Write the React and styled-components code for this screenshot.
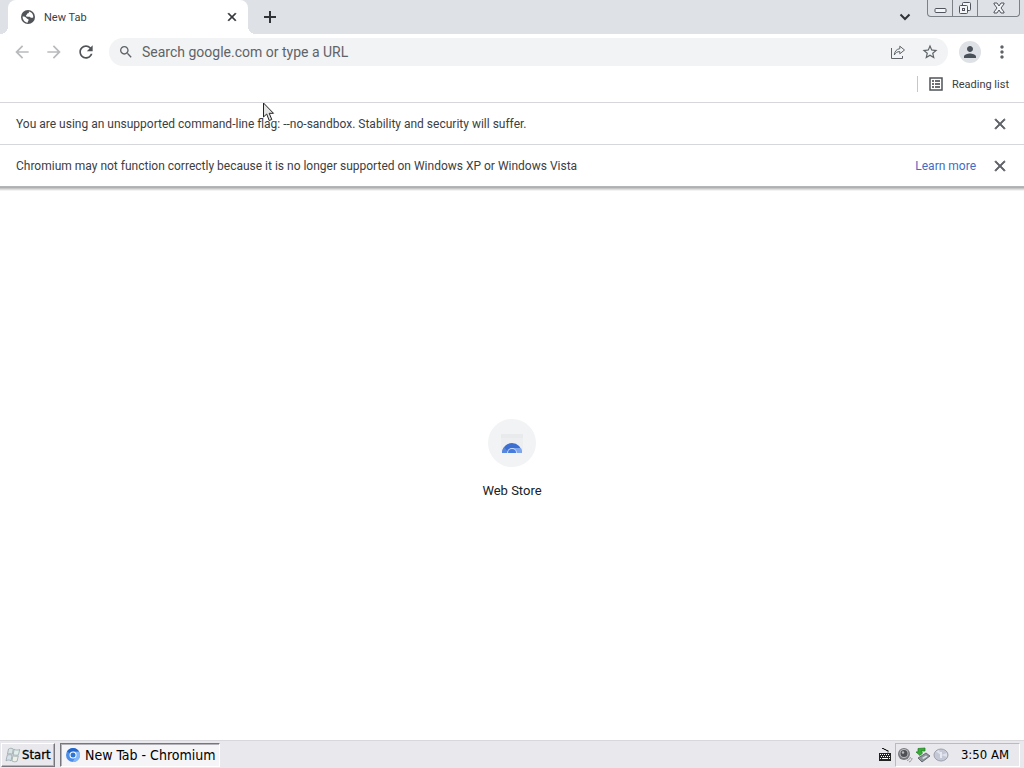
import React from "react";
import styled, { createGlobalStyle } from "styled-components";

const GlobalStyle = createGlobalStyle`
  *, *::before, *::after { box-sizing: border-box; }
  body {
    margin: 0;
    background: #fff;
    font-family: Roboto, "Noto Sans", sans-serif;
    font-size: 12px;
    color: #3c4043;
  }
  button, input { font: inherit; color: inherit; }
  button { border: 0; padding: 0; background: none; }
`;

const Desktop = styled.div`
  position: relative;
  display: flex;
  flex-direction: column;
  min-height: 100vh;
`;

const TabStrip = styled.header`
  display: flex;
  align-items: flex-start;
  height: 34px;
  padding-left: 8px;
  background: #dee1e6;
`;

const Tab = styled.div`
  position: relative;
  display: flex;
  align-items: center;
  gap: 8px;
  width: 240px;
  height: 34px;
  padding: 0 8px 0 12px;
  border-radius: 8px 8px 0 0;
  background: #fff;
  font-size: 11px;

  &::before, &::after {
    content: "";
    position: absolute;
    bottom: 0;
    width: 8px;
    height: 8px;
  }
  &::before {
    right: 100%;
    background: radial-gradient(circle at 0 0, transparent 8px, #fff 8px);
  }
  &::after {
    left: 100%;
    background: radial-gradient(circle at 100% 0, transparent 8px, #fff 8px);
  }
`;

const TabTitle = styled.span`
  flex: 1;
`;

const IconButton = styled.button`
  display: flex;
  flex: none;
  align-items: center;
  justify-content: center;
  width: ${(p) => p.$size || 32}px;
  height: ${(p) => p.$size || 32}px;
  color: ${(p) => p.$color || "#5f6368"};
`;

const NewTabButton = styled(IconButton)`
  margin: 3px auto 0 8px;
`;

const TabSearchButton = styled(IconButton)`
  margin: 3px 8px 0 0;
`;

const WindowControls = styled.div`
  display: flex;
  height: 17px;
  margin-right: 4px;
  border: 1px solid #7c8087;
  border-top: 0;
  border-radius: 0 0 4px 4px;
`;

const WindowButton = styled.button`
  display: flex;
  align-items: center;
  justify-content: center;
  width: ${(p) => p.$width}px;
  height: 16px;
  color: #50555d;

  & + & { border-left: 1px solid #7c8087; }
`;

const Toolbar = styled.nav`
  display: flex;
  align-items: center;
  height: 36px;
  padding: 0 6px;
`;

const Omnibox = styled.label`
  display: flex;
  flex: 1;
  align-items: center;
  height: 28px;
  margin: 0 6px 0 7px;
  padding: 0 2px 0 9px;
  border-radius: 14px;
  background: #f1f3f4;
  color: #5f6368;
`;

const OmniboxInput = styled.input`
  flex: 1;
  min-width: 0;
  height: 24px;
  margin-left: 8px;
  padding: 0;
  border: 0;
  outline: 0;
  background: none;
  font-size: 14px;

  &::placeholder { color: #5f6368; opacity: 1; }
`;

const Avatar = styled.span`
  display: flex;
  align-items: center;
  justify-content: center;
  width: 22px;
  height: 22px;
  border-radius: 50%;
  background: #dee1e6;
  color: #4a5158;
`;

const BookmarkBar = styled.div`
  display: flex;
  align-items: center;
  justify-content: flex-end;
  height: 32px;
  padding: 0 15px 4px 0;
`;

const ReadingList = styled.button`
  display: flex;
  align-items: center;
  gap: 8px;
  height: 16px;
  padding-left: 10px;
  border-left: 1px solid #c4c7cc;
  font-size: 11px;
`;

const InfoBar = styled.section`
  display: flex;
  align-items: center;
  height: 42px;
  padding: 0 8px 0 16px;
  border-top: 1px solid #d5d7da;
`;

const InfoText = styled.p`
  flex: 1;
  margin: 0;
`;

const LearnMore = styled.a`
  margin-right: 8px;
  color: #3f6cc4;
  text-decoration: none;
`;

const Page = styled.main`
  display: flex;
  flex: 1;
  align-items: center;
  justify-content: center;
  padding-bottom: 8px;
  border-top: 1px solid #b4b5b6;
  background: linear-gradient(#a4a5a6, #fff 4px);
`;

const Shortcut = styled.a`
  display: flex;
  flex-direction: column;
  align-items: center;
  gap: 15px;
  color: #202124;
  font-size: 13px;
  line-height: 18px;
  text-decoration: none;
`;

const ShortcutIcon = styled.span`
  display: flex;
  align-items: center;
  justify-content: center;
  width: 48px;
  height: 48px;
  border-radius: 50%;
  background: #f1f3f4;
`;

const TaskBar = styled.footer`
  display: flex;
  align-items: center;
  height: 28px;
  padding: 0 4px 0 1px;
  border-top: 1px solid #d8d7dc;
  background: #e9e8ec;
  color: #000;
  font-family: "DejaVu Sans Condensed", "DejaVu Sans", sans-serif;
  font-size: 13px;
`;

const StartButton = styled.button`
  display: flex;
  align-items: center;
  gap: 1px;
  width: 54px;
  height: 24px;
  padding-left: 3px;
  border: 1px solid;
  border-color: #fff #77767c #77767c #fff;
  box-shadow: inset -1px -1px #b4b3ba;
  -webkit-text-stroke: 0.3px #000;
`;

const TaskButton = styled.button`
  display: flex;
  align-items: center;
  gap: 4px;
  width: 160px;
  height: 24px;
  margin-left: 5px;
  padding-left: 4px;
  border: 1px solid;
  border-color: #77767c #fff #fff #77767c;
  box-shadow: inset 1px 1px #b4b3ba;
  background: #f5f4f7;
  font-size: 14px;
  white-space: nowrap;
`;

const KeyboardTray = styled.span`
  display: flex;
  margin: 0 3px 0 auto;
`;

const Tray = styled.div`
  display: flex;
  align-items: center;
  gap: 2px;
  height: 24px;
  padding: 0 10px 0 1px;
  border: 1px solid;
  border-color: #bbbac1 #fff #fff #bbbac1;
`;

const Clock = styled.time`
  margin-left: 10px;
`;

const Cursor = styled.svg`
  position: absolute;
  top: 102px;
  left: 262px;
  pointer-events: none;
`;

const Glyph = ({ d, size = 16, box = 24, weight = 0 }) => (
  <svg width={size} height={size} viewBox={`0 0 ${box} ${box}`} fill="currentColor" aria-hidden="true">
    <path d={d} stroke="currentColor" strokeWidth={weight} />
  </svg>
);

const paths = {
  close: "M19 6.41 17.59 5 12 10.59 6.41 5 5 6.41 10.59 12 5 17.59 6.41 19 12 13.41 17.59 19 19 17.59 13.41 12z",
  back: "M20 11H7.83l5.59-5.59L12 4l-8 8 8 8 1.41-1.41L7.83 13H20v-2z",
  forward: "M12 4l-1.41 1.41L16.17 11H4v2h12.17l-5.58 5.59L12 20l8-8z",
  reload: "M17.65 6.35C16.2 4.9 14.21 4 12 4c-4.42 0-7.99 3.58-7.99 8s3.57 8 7.99 8c3.73 0 6.84-2.55 7.73-6h-2.08c-.82 2.33-3.04 4-5.65 4-3.31 0-6-2.69-6-6s2.69-6 6-6c1.66 0 3.14.69 4.22 1.78L13 11h7V4l-2.35 2.35z",
  search: "M15.5 14h-.79l-.28-.27C15.41 12.59 16 11.11 16 9.5 16 5.91 13.09 3 9.5 3S3 5.91 3 9.5 5.91 16 9.5 16c1.61 0 3.09-.59 4.23-1.57l.27.28v.79l5 4.99L20.49 19l-4.99-5zm-6 0C7.01 14 5 11.99 5 9.5S7.01 5 9.5 5 14 7.01 14 9.5 11.99 14 9.5 14z",
  star: "M22 9.24l-7.19-.62L12 2 9.19 8.63 2 9.24l5.46 4.73L5.82 21 12 17.27 18.18 21l-1.63-7.03L22 9.24zM12 15.4l-3.76 2.27 1-4.28-3.32-2.88 4.38-.38L12 6.1l1.71 4.04 4.38.38-3.32 2.88 1 4.28L12 15.4z",
  person: "M12 12c2.21 0 4-1.79 4-4s-1.79-4-4-4-4 1.79-4 4 1.79 4 4 4zm0 2c-2.67 0-8 1.34-8 4v2h16v-2c0-2.66-5.33-4-8-4z",
  more: "M12 8c1.1 0 2-.9 2-2s-.9-2-2-2-2 .9-2 2 .9 2 2 2zm0 2c-1.1 0-2 .9-2 2s.9 2 2 2 2-.9 2-2-.9-2-2-2zm0 6c-1.1 0-2 .9-2 2s.9 2 2 2 2-.9 2-2-.9-2-2-2z",
};

const GlobeIcon = () => (
  <svg width="16" height="16" viewBox="0 0 16 16" aria-hidden="true">
    <circle cx="8" cy="8" r="7" fill="#505458" />
    <path d="M2.6 7.6C4.4 7.5 5.8 8 6.6 9.2c.6.9 1.8.6 2 1.5.2 1-.9 1.4-1 3C4.800 13.500 2.500 11 2.600 7.600zM8.800 2.500c.4 1.200-.1 1.900-1.300 2.100-.9.200-.3 1.400-1.200 1.700-.6.200-.5 1.100.2 1.300 1.400.4 3-.4 3.800.6.500.700 1.300.8 2.900.4C13.700 5.500 11.500 2.900 8.800 2.500z" fill="#fff" />
  </svg>
);

const ShareIcon = () => (
  <svg width="16" height="16" viewBox="0 0 16 16" fill="none" stroke="currentColor" aria-hidden="true">
    <path d="M1.500 4v10.500h11V12" />
    <path d="M9.800 2.200 14.500 6l-4.700 3.800V7.600C7.300 7.500 5.500 8.700 4.300 11c.3-3.600 2.200-6 5.500-6.300z" strokeLinejoin="round" />
  </svg>
);

const ListIcon = () => (
  <svg width="16" height="16" viewBox="0 0 16 16" aria-hidden="true">
    <path d="M2 2h12v12H2z" fill="none" stroke="#505458" strokeWidth="1.500" />
    <path d="M4 4h2v2H4zM4 7h2v2H4zM4 10h2v2H4zM7 4h5v2H7zM7 7h5v2H7zM7 10h5v2H7z" fill="#6b6f73" />
  </svg>
);

const ChromiumIcon = () => (
  <svg width="16" height="16" viewBox="0 0 16 16" aria-hidden="true">
    <circle cx="8" cy="8" r="7" fill="#4b8eea" />
    <path d="M8 8 2 4.400A7 7 0 0 1 14.100 4.600L8 4.700z" fill="#2467c9" />
    <path d="M8 4.700h6.200A7 7 0 0 1 7.500 15l3.400-5.400z" fill="#82b7fa" />
    <circle cx="8" cy="8" r="3.500" fill="#fff" />
    <circle cx="8" cy="8" r="2.500" fill="#2e75d6" />
  </svg>
);

const WebStoreIcon = () => (
  <svg width="24" height="24" viewBox="0 0 24 24" aria-hidden="true">
    <path d="M1 3h22v18H1z" fill="#eceeef" />
    <path d="M1 3h22v4H1z" fill="#e8eaeb" />
    <path d="M2 22a10 10 0 0 1 20 0z" fill="#3d6fd0" />
    <path d="M12 17h9a10 10 0 0 1 1 5h-8z" fill="#7ea6ed" />
    <path d="M2 22a10 10 0 0 1 2-6l5 6z" fill="#5686df" />
    <path d="M7 22a5 5 0 0 1 10 0z" fill="#c8dafa" />
    <path d="M8 22a4 4 0 0 1 8 0z" fill="#477bdc" />
  </svg>
);

const WindowsIcon = () => (
  <svg width="16" height="18" viewBox="0 0 16 18" aria-hidden="true">
    <g stroke="#8e9da3" strokeWidth=".7">
      <path d="M3.500 3C5 2 6.500 2 8.300 3L7.300 8.300C5.500 7.500 4 7.500 2.400 8.300z" fill="#d9e3e4" />
      <path d="M9.200 3.300c1.800 1 3.500 1 5.500.2l-1.200 5.200c-1.800.8-3.600.7-5.300-.2z" fill="#e3eeea" />
      <path d="M2.200 9.300c1.500-.8 3.200-.8 4.900 0L6 14.800c-1.700-1-3.300-1-5 0z" fill="#d5e2e8" />
      <path d="M8 9.600c1.700.9 3.500 1 5.300.2l-1.200 5.400c-1.800.8-3.500.7-5.200-.2z" fill="#edf0e6" />
    </g>
  </svg>
);

const KeyboardIcon = () => (
  <svg width="14" height="16" viewBox="0 0 14 16" aria-hidden="true">
    <path d="M4 1.500h2v1h2v1h2v2" fill="none" stroke="#222" />
    <path d="M1 6h12v8H1z" fill="#222" />
    <path d="M2 7.500h10M3 9.500h10M2 11.500h1M11 11.500h1" stroke="#fff" strokeDasharray="1 1" />
    <path d="M4 11.500h6" stroke="#fff" />
  </svg>
);

const SpeakerIcon = () => (
  <svg width="16" height="16" viewBox="0 0 16 16" aria-hidden="true">
    <circle cx="7" cy="7" r="6" fill="#77797d" />
    <circle cx="7" cy="6.500" r="4.500" fill="#b9bbbf" />
    <circle cx="7" cy="6.500" r="3.500" fill="#4e5055" />
    <circle cx="6" cy="5.500" r="1.200" fill="#b9bbbf" />
    <path d="M10 13.500c2-.5 3-1.500 3.400-3.500M12 15c2-.7 2.800-2 3-4" fill="none" stroke="#929398" />
  </svg>
);

const SafelyRemoveIcon = () => (
  <svg width="16" height="16" viewBox="0 0 16 16" aria-hidden="true">
    <path d="m3 11 8-5 4 3-8 6z" fill="#8e969d" stroke="#454c52" strokeWidth=".7" />
    <path d="m7 11 4-2.500 1.500 1L8.500 12z" fill="#dce1e5" />
    <path d="M10 1v3H6l1.500 2L5 8.500 1 5l2-.2L3 1.500z" fill="#39ad36" stroke="#1e7b21" strokeWidth=".7" />
  </svg>
);

const DiscIcon = () => (
  <svg width="16" height="16" viewBox="0 0 16 16" aria-hidden="true">
    <ellipse cx="8" cy="8" rx="7" ry="6" fill="#c4c8d6" stroke="#9da1ad" />
    <path d="M8 8 3 4.500 6 3zM8 8l6-2v4z" fill="#dfe2ec" />
    <path d="M7 5h2v6H7z" fill="#e6e8f2" />
  </svg>
);

export default function App() {
  return (
    <Desktop>
      <GlobalStyle />
      <TabStrip>
        <Tab>
          <GlobeIcon />
          <TabTitle>New Tab</TabTitle>
          <IconButton $size={16} $color="#303438" aria-label="Close tab">
            <Glyph d={paths.close} size={14} weight={1} />
          </IconButton>
        </Tab>
        <NewTabButton $size={28} $color="#303438" aria-label="Open a new tab">
          <svg width="14" height="14" viewBox="0 0 14 14" aria-hidden="true">
            <path d="M7 1v12M1 7h12" stroke="currentColor" strokeWidth="2" />
          </svg>
        </NewTabButton>
        <TabSearchButton $size={28} $color="#303438" aria-label="Search tabs">
          <svg width="12" height="8" viewBox="0 0 12 8" fill="none" aria-hidden="true">
            <path d="m1.500 1.500 4.500 4.500 4.500-4.500" stroke="currentColor" strokeWidth="2" />
          </svg>
        </TabSearchButton>
        <WindowControls>
          <WindowButton $width={24} aria-label="Minimize">
            <svg width="13" height="12" viewBox="0 0 13 12" aria-hidden="true">
              <rect x="1" y="6.500" width="11" height="4" rx="1" fill="#f4f5f7" stroke="currentColor" />
            </svg>
          </WindowButton>
          <WindowButton $width={25} aria-label="Restore">
            <svg width="14" height="14" viewBox="0 0 14 14" fill="#f4f5f7" stroke="currentColor" aria-hidden="true">
              <rect x="4.500" y="1.500" width="8" height="8" rx="1" />
              <rect x="1.500" y="4.500" width="8" height="8" rx="1" />
              <rect x="4.500" y="7.500" width="2" height="2" />
            </svg>
          </WindowButton>
          <WindowButton $width={42} aria-label="Close">
            <svg width="12" height="12" viewBox="0 0 12 12" aria-hidden="true">
              <path d="M1 1h3l2 3 2-3h3v1L8 6l3 4v1H8L6 8l-2 3H1v-1l3-4-3-4z" fill="#f4f5f7" stroke="currentColor" />
            </svg>
          </WindowButton>
        </WindowControls>
      </TabStrip>

      <Toolbar>
        <IconButton $color="#b8babd" aria-label="Back"><Glyph d={paths.back} size={20} /></IconButton>
        <IconButton $color="#b8babd" aria-label="Forward"><Glyph d={paths.forward} size={20} /></IconButton>
        <IconButton $color="#505458" aria-label="Reload"><Glyph d={paths.reload} size={20} /></IconButton>
        <Omnibox>
          <Glyph d={paths.search} size={16} />
          <OmniboxInput type="text" aria-label="Address and search bar" placeholder="Search google.com or type a URL" />
          <IconButton aria-label="Share"><ShareIcon /></IconButton>
          <IconButton aria-label="Bookmark this tab"><Glyph d={paths.star} size={18} /></IconButton>
        </Omnibox>
        <IconButton aria-label="Profile">
          <Avatar><Glyph d={paths.person} size={18} /></Avatar>
        </IconButton>
        <IconButton aria-label="Menu"><Glyph d={paths.more} size={20} /></IconButton>
      </Toolbar>

      <BookmarkBar>
        <ReadingList>
          <ListIcon />
          Reading list
        </ReadingList>
      </BookmarkBar>

      <InfoBar>
        <InfoText>You are using an unsupported command-line flag: --no-sandbox. Stability and security will suffer.</InfoText>
        <IconButton aria-label="Dismiss"><Glyph d={paths.close} size={18} weight={1} /></IconButton>
      </InfoBar>
      <InfoBar>
        <InfoText>Chromium may not function correctly because it is no longer supported on Windows XP or Windows Vista</InfoText>
        <LearnMore href="#learn-more">Learn more</LearnMore>
        <IconButton aria-label="Dismiss"><Glyph d={paths.close} size={18} weight={1} /></IconButton>
      </InfoBar>

      <Page>
        <Shortcut href="#web-store">
          <ShortcutIcon><WebStoreIcon /></ShortcutIcon>
          Web Store
        </Shortcut>
      </Page>

      <TaskBar>
        <StartButton><WindowsIcon />Start</StartButton>
        <TaskButton><ChromiumIcon />New Tab - Chromium</TaskButton>
        <KeyboardTray><KeyboardIcon /></KeyboardTray>
        <Tray>
          <SpeakerIcon />
          <SafelyRemoveIcon />
          <DiscIcon />
          <Clock>3:50 AM</Clock>
        </Tray>
      </TaskBar>

      <Cursor width="14" height="22" viewBox="0 0 14 22" aria-hidden="true">
        <path d="M1.500 1v14l3.200-3 2.500 6.500 2.600-1-2.600-6.200h4.300z" fill="#e4e4e4" stroke="#222" />
      </Cursor>
    </Desktop>
  );
}
